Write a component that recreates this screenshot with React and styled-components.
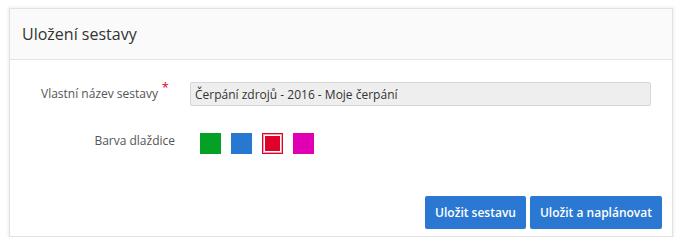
import styled, { createGlobalStyle } from "styled-components";

const GlobalStyle = createGlobalStyle`
  body {
    margin: 0;
    background: #ffffff;
    font-family: "Open Sans", "Liberation Sans", sans-serif;
  }
`;

const Panel = styled.section`
  width: 662px;
  height: 227px;
  margin: 8px 0 0 9px;
  border: 1px solid #e2e2e2;
  box-shadow: 0 0 3px 1px rgba(0, 0, 0, 0.07);
  display: flex;
  flex-direction: column;
  background: #fff;
`;

const Header = styled.header`
  height: 51px;
  box-sizing: border-box;
  background: #fafafa;
  border-bottom: 1px solid #e4e4e4;
  display: flex;
  align-items: center;
  padding: 0 12px;

  & h2 {
    margin: 0;
    font-size: 16px;
    font-weight: 400;
    color: #333;
  }
`;

const Form = styled.div`
  padding: 22px 21px 0 0;
  display: grid;
  grid-template-columns: 165px 1fr;
  column-gap: 15px;
  row-gap: 23px;
`;

const Label = styled.label`
  position: relative;
  justify-self: end;
  font-size: 12px;
  color: #555;
  line-height: 24px;
  padding-right: ${({ required }) => (required ? "17px" : "0")};

  &::after {
    content: ${({ required }) => (required ? '"*"' : "none")};
    position: absolute;
    right: 6px;
    top: -7px;
    color: #e0001b;
    font-size: 13px;
  }
`;

const Input = styled.input`
  height: 24px;
  box-sizing: border-box;
  border: 1px solid #d6d6d6;
  border-radius: 2px;
  background: #eeeeee;
  padding: 0 4px;
  font-family: inherit;
  font-size: 12px;
  color: #333;
  outline: none;
`;

const Swatches = styled.div`
  display: flex;
  gap: 10px;
  padding: 4px 0 0 10px;
`;

const Swatch = styled.span`
  width: 21px;
  height: 21px;
  box-sizing: border-box;
  background: ${({ color }) => color};
  ${({ selected, color }) =>
    selected &&
    `
    border: 2px solid #f2a0ab;
    box-shadow: inset 0 0 0 1px #fff;
    outline: 1px solid ${color};
    outline-offset: -1px;
  `}
`;

const Footer = styled.footer`
  margin-top: auto;
  display: flex;
  justify-content: flex-end;
  gap: 4px;
  padding: 0 10px 7px 0;
`;

const Button = styled.button`
  height: 33px;
  padding: 0 10px;
  border: none;
  border-radius: 2px;
  background: #2a78d2;
  color: #fff;
  font-family: inherit;
  font-size: 12px;
  font-weight: 600;
  cursor: pointer;
`;

const colors = [
  { color: "#03a226" },
  { color: "#2877d0" },
  { color: "#e1002a", selected: true },
  { color: "#e000b4" },
];

export default function App() {
  return (
    <>
      <GlobalStyle />
      <Panel>
        <Header>
          <h2>Uložení sestavy</h2>
        </Header>
        <Form>
          <Label required>Vlastní název sestavy</Label>
          <Input readOnly value="Čerpání zdrojů - 2016 - Moje čerpání" />
          <Label>Barva dlaždice</Label>
          <Swatches>
            {colors.map((c) => (
              <Swatch key={c.color} color={c.color} selected={c.selected} />
            ))}
          </Swatches>
        </Form>
        <Footer>
          <Button>Uložit sestavu</Button>
          <Button>Uložit a naplánovat</Button>
        </Footer>
      </Panel>
    </>
  );
}
